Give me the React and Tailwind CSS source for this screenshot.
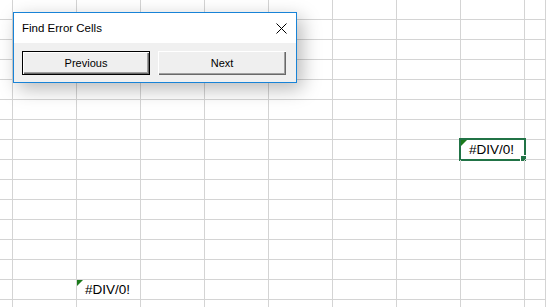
import React from 'react';

const ROWS = 16;
const COLS = 10;

// cells with an error value, keyed by "row-col"
const errorCells = {
  '7-8': { selected: true },
  '14-2': { selected: false },
};

function ErrorTriangle() {
  return (
    <svg className="absolute left-0 top-0" width="6" height="6" viewBox="0 0 6 6">
      <polygon points="0,0 6,0 0,6" fill="#1b7a1b" />
    </svg>
  );
}

function Cell({ row, col }) {
  const err = errorCells[`${row}-${col}`];
  return (
    <div className="relative h-[20px] border-r border-b border-[#d4d4d4]">
      {err && (
        <>
          <ErrorTriangle />
          <div className="h-full flex items-center pl-[8px] pt-[1px] text-[13.5px] leading-none text-black whitespace-nowrap">
            #DIV/0!
          </div>
          {err.selected && (
            <div className="absolute -left-[2px] -top-[2px] -right-[2px] -bottom-[2px] border-2 border-[#217346]">
              <div className="absolute -right-[3px] -bottom-[3px] w-[5px] h-[5px] bg-[#217346] border border-white box-content" />
            </div>
          )}
        </>
      )}
    </div>
  );
}

function CloseIcon() {
  return (
    <svg width="11" height="11" viewBox="0 0 11 11">
      <path d="M0.5 0.5 L10.5 10.5 M10.5 0.5 L0.5 10.5" stroke="#000" strokeWidth="1" />
    </svg>
  );
}

function FindDialog() {
  return (
    <div className="absolute left-[13px] top-[12px] w-[284px] h-[71px] border border-[#1883d7] bg-[#f0f0f0] shadow-[5px_6px_18px_rgba(0,0,0,0.28)] flex flex-col">
      <div className="h-[30px] bg-white flex items-center justify-between pl-[8px] pr-[9px]">
        <span className="text-[11.5px] text-black pt-[1px]">Find Error Cells</span>
        <CloseIcon />
      </div>
      <div className="flex gap-[8px] pl-[8px] pt-[8px]">
        <button className="w-[128px] h-[24px] border border-black bg-[#efefef] shadow-[inset_1px_1px_0_#ffffff,inset_-1px_-1px_0_#696969,inset_-2px_-2px_0_#a0a0a0] text-[11px] text-black">
          Previous
        </button>
        <button className="w-[128px] h-[24px] bg-[#efefef] shadow-[inset_1px_1px_0_#ffffff,inset_-1px_-1px_0_#696969,inset_-2px_-2px_0_#a0a0a0] text-[11px] text-black">
          Next
        </button>
      </div>
    </div>
  );
}

export default function App() {
  return (
    <div
      className="relative w-[546px] h-[307px] overflow-hidden bg-white"
      style={{ fontFamily: '"Liberation Sans", Arial, sans-serif' }}
    >
      <div className="grid grid-cols-[13px_repeat(8,64px)_1fr]">
        {Array.from({ length: ROWS }).map((_, r) =>
          Array.from({ length: COLS }).map((_, c) => <Cell key={`${r}-${c}`} row={r} col={c} />)
        )}
      </div>
      <FindDialog />
    </div>
  );
}
